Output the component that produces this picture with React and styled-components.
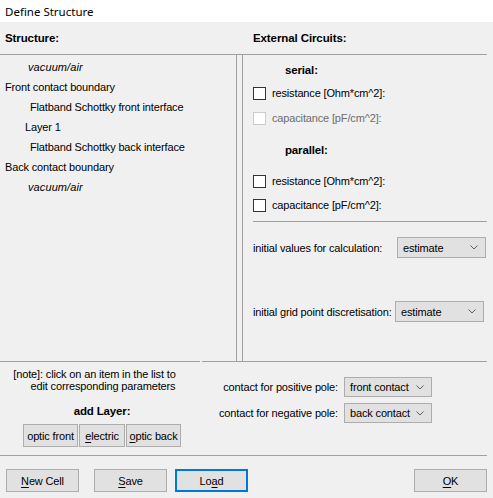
import React from 'react'
import styled, { createGlobalStyle } from 'styled-components'

const GlobalStyle = createGlobalStyle`
  html, body {
    margin: 0;
    padding: 0;
    background: #f0f0f0;
  }
  * { box-sizing: border-box; }
`

const FONT = `"Liberation Sans", Arial, sans-serif`

const Window = styled.div`
  width: 493px;
  height: 498px;
  background: #f0f0f0;
  font-family: ${FONT};
  font-size: 11px;
  letter-spacing: -0.15px;
  color: #000;
  overflow: hidden;
`

const TitleBar = styled.div`
  height: 22px;
  background: #fff;
  padding-left: 5px;
  display: flex;
  align-items: center;
  font-family: "Noto Sans", "Liberation Sans", sans-serif;
  font-size: 11.5px;
  letter-spacing: 0;
`

const Dialog = styled.div`
  padding-right: 6px;
`

const HeaderRow = styled.div`
  height: 33px;
  display: grid;
  grid-template-columns: 243px 1fr;
  border-bottom: 1px solid #a0a0a0;
`

const HeaderCell = styled.div`
  display: flex;
  align-items: center;
  padding-left: ${p => p.$pad}px;
  font-weight: bold;
  font-size: 11.5px;
  letter-spacing: -0.1px;
`

const Body = styled.div`
  height: 306px;
  display: flex;
  gap: 5px;
`

const StructureList = styled.ul`
  width: 237px;
  margin: 0;
  padding: 2px 0 0;
  list-style: none;
  border-right: 1px solid #a0a0a0;
`

const ListItem = styled.li`
  height: 20px;
  line-height: 20px;
  padding-left: ${p => p.$indent}px;
  font-style: ${p => (p.$italic ? 'italic' : 'normal')};
  letter-spacing: ${p => (p.$italic ? '0.1px' : '-0.15px')};
  white-space: nowrap;
`

const CircuitPanel = styled.div`
  flex: 1;
  border-left: 1px solid #a0a0a0;
  padding: 5px 0 0 10px;
  display: flex;
  flex-direction: column;
`

const GroupLabel = styled.div`
  height: 20px;
  line-height: 20px;
  padding-left: 32px;
  margin-top: ${p => p.$top || 0}px;
  font-weight: bold;
  font-size: 11.5px;
`

const CheckRow = styled.label`
  height: 24px;
  display: flex;
  align-items: center;
  gap: 6px;
  margin-top: ${p => p.$top || 0}px;
  color: ${p => (p.$disabled ? '#6d6d6d' : '#000')};
`

const CheckBox = styled.span`
  width: 13px;
  height: 13px;
  border: 1px solid ${p => (p.$disabled ? '#cccccc' : '#333333')};
  background: #fff;
  flex: none;
`

const Rule = styled.div`
  height: 1px;
  background: #a0a0a0;
  margin-top: 4px;
`

const SettingRow = styled.div`
  display: flex;
  align-items: center;
  height: 21px;
  margin-top: ${p => p.$top}px;
`

const SettingLabel = styled.span`
  width: ${p => p.$width}px;
  white-space: nowrap;
`

const Select = styled.div`
  width: ${p => p.$width}px;
  height: ${p => p.$height}px;
  background: #e1e1e1;
  border: 1px solid #adadad;
  display: flex;
  align-items: center;
  justify-content: space-between;
  padding: 0 7px 0 5px;
  white-space: nowrap;
`

const Chevron = () => (
  <svg width="8" height="5" viewBox="0 0 8 5">
    <polyline points="0.5,0.5 4,4 7.5,0.5" fill="none" stroke="#606060" strokeWidth="1" />
  </svg>
)

const BottomRow = styled.div`
  height: 94px;
  display: grid;
  grid-template-columns: 200px 1fr;
  gap: 2px;
`

const NotePanel = styled.div`
  border-top: 1px solid #a0a0a0;
  padding-top: 6px;
  display: flex;
  flex-direction: column;
  align-items: center;
`

const NoteText = styled.div`
  line-height: 12px;
  text-align: center;
  padding-left: ${p => p.$left || 0}px;
  padding-right: ${p => p.$right || 0}px;
  white-space: nowrap;
`

const AddLabel = styled.div`
  font-weight: bold;
  font-size: 11.5px;
  margin-top: 12px;
  line-height: 14px;
  padding-left: 4px;
`

const ButtonGroup = styled.div`
  display: flex;
  gap: 1px;
  margin-top: 6px;
  padding-left: 4px;
`

const Button = styled.button`
  height: ${p => p.$height || 23}px;
  width: ${p => p.$width}px;
  padding: 0;
  background: #e1e1e1;
  border: ${p => (p.$focused ? '2px solid #0078d7' : '1px solid #adadad')};
  font-family: ${FONT};
  font-size: 11px;
  letter-spacing: -0.15px;
  color: #000;
  white-space: nowrap;
  u { text-decoration-thickness: 1px; text-underline-offset: 2px; }
`

const ContactPanel = styled.div`
  border-top: 1px solid #a0a0a0;
  padding-top: 15px;
  display: flex;
  flex-direction: column;
  gap: 6px;
`

const ContactRow = styled.div`
  display: flex;
  align-items: center;
  gap: 6px;
`

const ContactLabel = styled.span`
  width: 136px;
  text-align: right;
  white-space: nowrap;
`

const Footer = styled.div`
  border-top: 1px solid #a0a0a0;
  padding: 13px 0 0 6px;
  display: flex;
  align-items: flex-start;
`

const Spacer = styled.div`
  width: ${p => p.$w || 0}px;
  flex: ${p => (p.$grow ? 1 : 'none')};
`

const structure = [
  { text: 'vacuum/air', indent: 28, italic: true },
  { text: 'Front contact boundary', indent: 5 },
  { text: 'Flatband Schottky front interface', indent: 30 },
  { text: 'Layer 1', indent: 25 },
  { text: 'Flatband Schottky back interface', indent: 30 },
  { text: 'Back contact boundary', indent: 5 },
  { text: 'vacuum/air', indent: 28, italic: true },
]

export default function App() {
  return (
    <Window>
      <GlobalStyle />
      <TitleBar>Define Structure</TitleBar>
      <Dialog>
        <HeaderRow>
          <HeaderCell $pad={5}>Structure:</HeaderCell>
          <HeaderCell $pad={10}>External Circuits:</HeaderCell>
        </HeaderRow>

        <Body>
          <StructureList>
            {structure.map((item, i) => (
              <ListItem key={i} $indent={item.indent} $italic={item.italic}>
                {item.text}
              </ListItem>
            ))}
          </StructureList>

          <CircuitPanel>
            <GroupLabel>serial:</GroupLabel>
            <CheckRow $top={1}>
              <CheckBox />
              resistance [Ohm*cm^2]:
            </CheckRow>
            <CheckRow $top={1} $disabled>
              <CheckBox $disabled />
              capacitance [pF/cm^2]:
            </CheckRow>
            <GroupLabel $top={10}>parallel:</GroupLabel>
            <CheckRow $top={9}>
              <CheckBox />
              resistance [Ohm*cm^2]:
            </CheckRow>
            <CheckRow>
              <CheckBox />
              capacitance [pF/cm^2]:
            </CheckRow>
            <Rule />
            <SettingRow $top={15}>
              <SettingLabel $width={144}>initial values for calculation:</SettingLabel>
              <Select $width={89} $height={21}>
                estimate
                <Chevron />
              </Select>
            </SettingRow>
            <SettingRow $top={43}>
              <SettingLabel $width={142}>initial grid point discretisation:</SettingLabel>
              <Select $width={89} $height={21}>
                estimate
                <Chevron />
              </Select>
            </SettingRow>
          </CircuitPanel>
        </Body>

        <BottomRow>
          <NotePanel>
            <NoteText $right={11}>[note]: click on an item in the list to</NoteText>
            <NoteText $left={6}>edit corresponding parameters</NoteText>
            <AddLabel>add Layer:</AddLabel>
            <ButtonGroup>
              <Button $width={55}>optic front</Button>
              <Button $width={46}>
                <u>e</u>lectric
              </Button>
              <Button $width={55}>
                <u>o</u>ptic back
              </Button>
            </ButtonGroup>
          </NotePanel>

          <ContactPanel>
            <ContactRow>
              <ContactLabel>contact for positive pole:</ContactLabel>
              <Select $width={88} $height={20}>
                front contact
                <Chevron />
              </Select>
            </ContactRow>
            <ContactRow>
              <ContactLabel>contact for negative pole:</ContactLabel>
              <Select $width={88} $height={20}>
                back contact
                <Chevron />
              </Select>
            </ContactRow>
          </ContactPanel>
        </BottomRow>

        <Footer>
          <Button $width={73}>
            <u>N</u>ew Cell
          </Button>
          <Spacer $w={15} />
          <Button $width={73}>
            <u>S</u>ave
          </Button>
          <Spacer $w={8} />
          <Button $width={73} $focused>
            Lo<u>a</u>d
          </Button>
          <Spacer $grow />
          <Button $width={73}>
            <u>O</u>K
          </Button>
        </Footer>
      </Dialog>
    </Window>
  )
}
